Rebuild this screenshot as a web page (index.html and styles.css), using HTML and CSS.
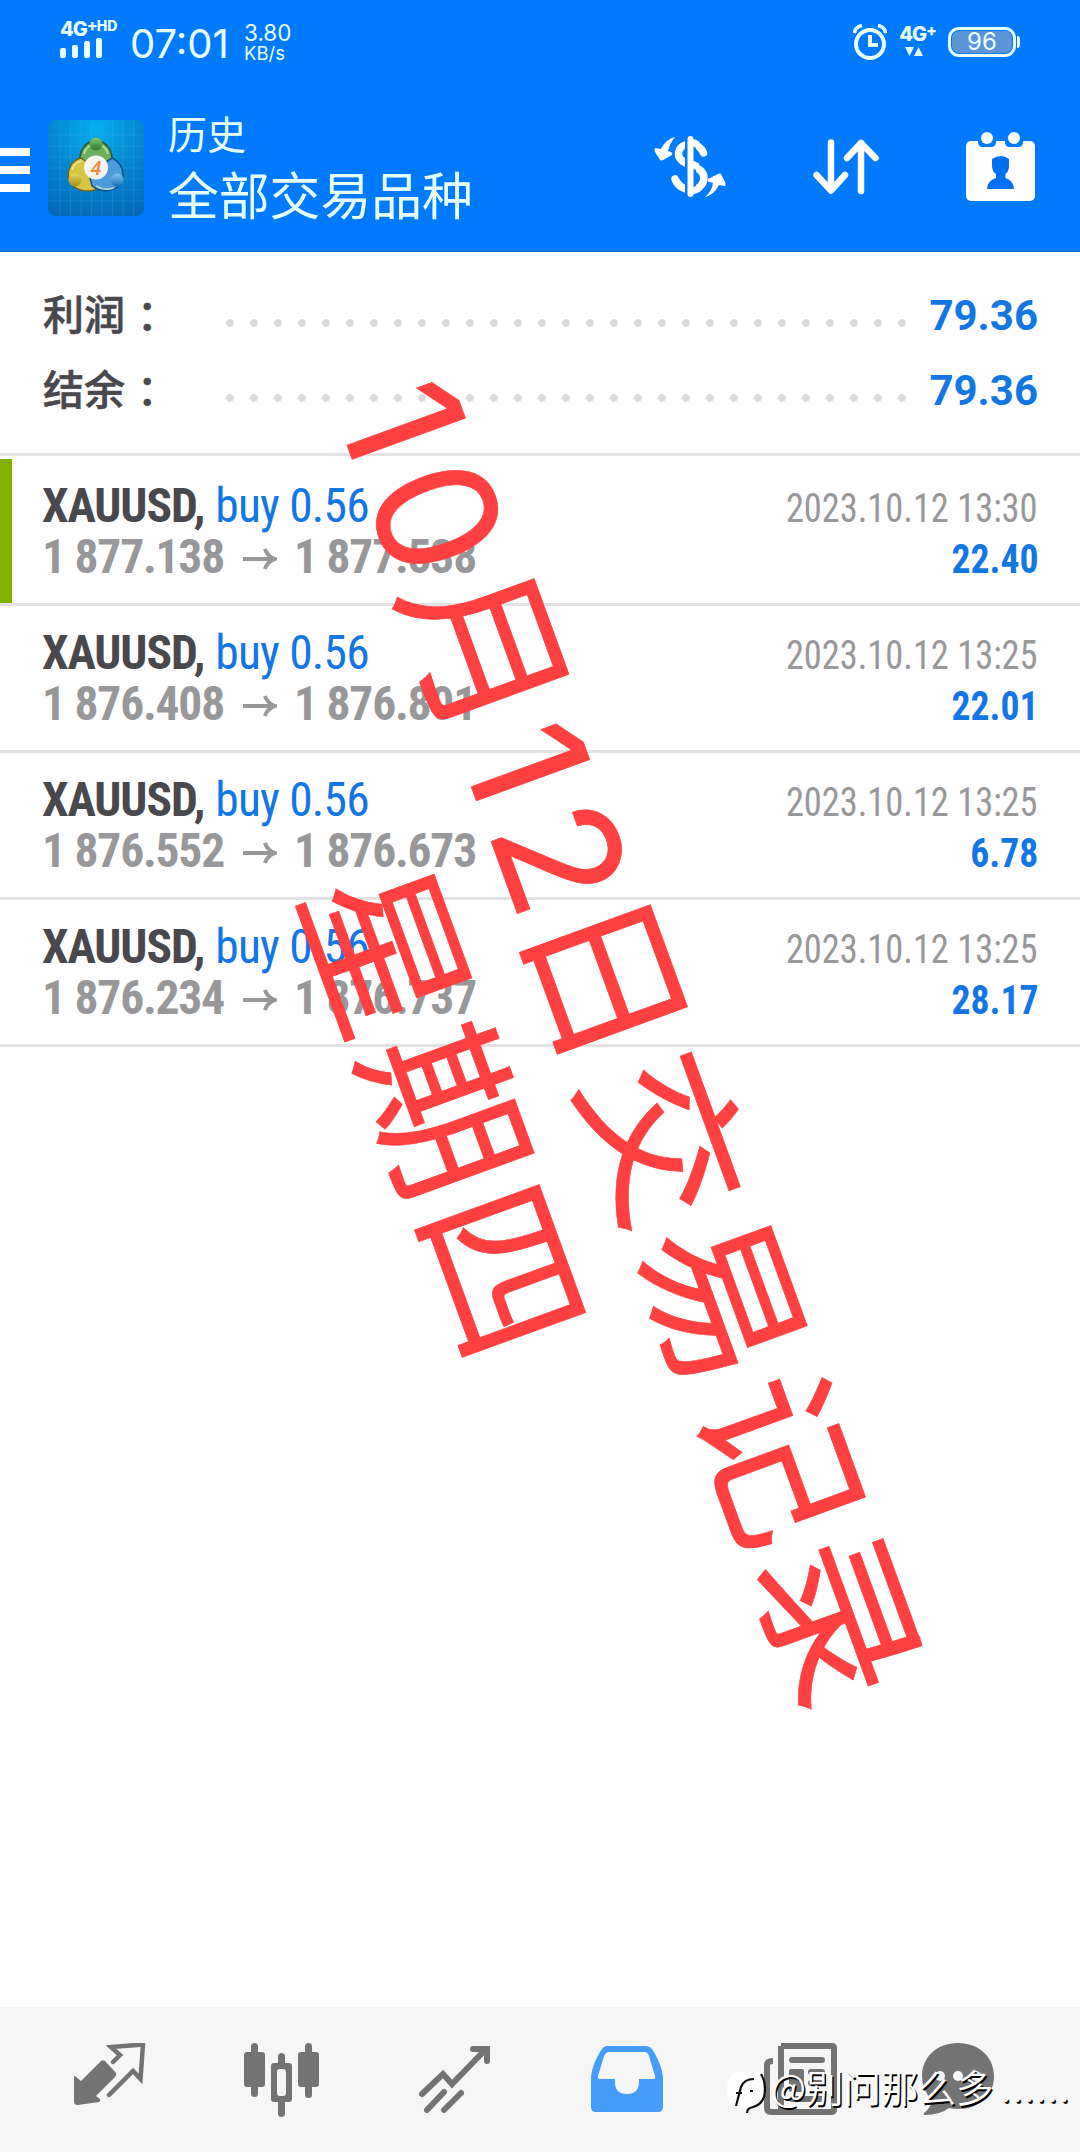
FILE: index.html
```
<!DOCTYPE html>
<html lang="zh-CN">
<head>
<meta charset="utf-8">
<title>历史</title>
<link rel="stylesheet" href="styles.css">
</head>
<body>
<div class="screen">
  <header class="top">
    <div class="status">
      <div class="signal">
        <div class="net">4G<sup class="plus">+</sup><sup class="hd">HD</sup></div>
        <svg width="42" height="20" viewBox="0 0 42 20" fill="#e8ffff"><rect x="0" y="10" width="6" height="10" rx="2"/><rect x="12" y="7" width="6" height="13" rx="2"/><rect x="24" y="3" width="6" height="17" rx="2"/><rect x="36" y="0" width="6" height="20" rx="2"/></svg>
      </div>
      <div class="clock">07:01</div>
      <div class="speed"><span class="rate">3.80</span><span class="unit">KB/s</span></div>
      <div class="status-right">
        <svg width="34" height="36" viewBox="0 0 34 36" fill="none" stroke="#e8ffff"><circle cx="17" cy="20" r="14" stroke-width="4"/><path d="M17 11v10h8" stroke-width="4"/><path d="M1.500 9Q2 3 9 1.500M32.500 9Q32 3 25 1.500" stroke-width="3.500"/></svg>
        <div class="data">
          <div class="net">4G<sup class="plus">+</sup></div>
          <svg width="18" height="9" viewBox="0 0 18 9" fill="#e8ffff"><path d="M0 0h9L4.500 9zM9 9h9L13.500 0z"/></svg>
        </div>
        <div class="battery"><span class="level">96</span></div>
      </div>
    </div>
    <div class="bar">
      <svg class="menu" width="30" height="44" viewBox="0 0 30 44" fill="#fff"><path d="M0 0h30v8H0zM0 18h30v8H0zM0 36h30v8H0z"/></svg>
      <svg class="logo" width="96" height="96" viewBox="0 0 96 96">
        <defs>
          <radialGradient id="sky" cx=".5" cy=".1" r=".95"><stop offset="0" stop-color="#02aff0"/><stop offset=".5" stop-color="#0687d0"/><stop offset="1" stop-color="#0368b8"/></radialGradient>
          <linearGradient id="green" x1="0" y1="0" x2="0" y2="1"><stop offset="0" stop-color="#8cc56a"/><stop offset="1" stop-color="#2b7a30"/></linearGradient>
          <linearGradient id="gold" x1="0" y1="0" x2="0" y2="1"><stop offset="0" stop-color="#e8d860"/><stop offset="1" stop-color="#a88a1c"/></linearGradient>
          <linearGradient id="blue" x1="0" y1="0" x2="0" y2="1"><stop offset="0" stop-color="#7cc4f2"/><stop offset="1" stop-color="#1d6fbe"/></linearGradient>
        </defs>
        <rect width="96" height="96" rx="7" fill="url(#sky)"/>
        <path d="M12 0v96M22.500 0v96M33 0v96M43.500 0v96M54 0v96M64.500 0v96M75 0v96M85.500 0v96M0 15h96M0 26h96M0 37h96M0 48h96M0 59h96M0 70h96M0 81h96" stroke="#5cc0ee" stroke-opacity=".18" fill="none"/>
        <path d="M48 21C58 21 65 30 64 42L48 48L32 42C31 30 38 21 48 21z" fill="#6fae5c" stroke="#24563a" stroke-width="1.500"/>
        <path d="M33 38L48 48L52 68C40 74 26 71 21 60C18 50 24 40 33 38z" fill="#d8c540" stroke="#6b6424" stroke-width="1.500"/>
        <path d="M64 38C73 42 77 52 74 61C68 73 54 73 44 66L42 58L48 48z" fill="#4a9cdc" stroke="#0f4f8c" stroke-width="1.500"/>
        <path d="M36 34Q38 25 48 24Q58 25 60 34M24 50Q26 42 34 41M48 66Q56 71 66 68" fill="none" stroke="#eaf6d0" stroke-opacity=".7" stroke-width="1.500"/>
        <circle cx="48" cy="24" r="6.500" fill="url(#green)"/><circle cx="27" cy="60" r="6.500" fill="url(#gold)"/><circle cx="69" cy="60" r="6.500" fill="url(#blue)"/>
        <circle cx="48" cy="47.500" r="12" fill="#f7f5f2"/>
        <text x="48" y="55" text-anchor="middle" class="four">4</text>
      </svg>
      <div class="titles"><span class="title">历史</span><span class="subtitle">全部交易品种</span></div>
      <div class="actions">
        <svg width="72" height="64" viewBox="0 0 72 64"><path d="M49.500 18C45 6 25 6 24.500 19C24 31 50 29 50 43C49 58 27 59 21 44" fill="none" stroke="#fff" stroke-width="7.500" stroke-linecap="round"/><path d="M36.500 5v55" stroke="#007aff" stroke-width="11"/><path d="M38 7.500Q41 8 44 10M38 29L44 32M38 56Q42 55.500 45 53" stroke="#fff" stroke-width="7" fill="none"/><path d="M36.500 4v55" stroke="#fff" stroke-width="6" stroke-linecap="round"/><path d="M21 2Q12 4 7 14L1 13Q0 15 1 17L6 25Q7 26 9 25L18 20Q19 18 17 17L14 16Q16 8 21 2zM51 62Q60 60 65 50L71 51Q72 50 71 47L67 39Q66 38 64 39L54 44Q53 46 55 47L59 48Q58 56 51 62z" fill="#fff"/></svg>
        <svg width="66" height="56" viewBox="0 0 66 56" fill="none" stroke="#fff" stroke-width="6.500" stroke-linecap="round" stroke-linejoin="round"><path d="M18 3.500V51M3.500 36L18 51.500L32 36M48 52V4M34 19L48 4L62.500 19"/></svg>
        <svg width="70" height="70" viewBox="0 0 70 70"><rect y="9" width="69" height="60" rx="5" fill="#fff"/><path d="M12 8v2q0 5 5 5h8q5 0 5-5V8zM39 8v2q0 5 5 5h8q5 0 5-5V8z" fill="#007aff"/><circle cx="21" cy="6" r="6" fill="#fff"/><circle cx="48" cy="6" r="6" fill="#fff"/><path d="M26 27Q35 21 43 27V34Q43 39 39.500 42V46Q48 49 48 57H21Q21 49 30 46V42Q26 39 26 34z" fill="#0070f0"/></svg>
      </div>
    </div>
  </header>
  <main class="content">
    <section class="summary">
      <div class="sum-row"><span class="label">利润<span class="colon">：</span></span><span class="dots"></span><span class="total">79.36</span></div>
      <div class="sum-row"><span class="label">结余<span class="colon">：</span></span><span class="dots"></span><span class="total">79.36</span></div>
    </section>
    <section class="deals">
      <article class="deal active"><div class="line"><span><b class="symbol">XAUUSD,</b> <span class="side">buy 0.56</span></span><span class="date">2023.10.12 13:30</span></div><div class="line"><span class="price"><span>1 877.138</span><svg class="arrow" viewBox="0 0 34 24"><path d="M0 12H31M22 2Q24 9 32 12Q24 15 22 22"/></svg><span>1 877.538</span></span><span class="profit">22.40</span></div></article>
      <article class="deal"><div class="line"><span><b class="symbol">XAUUSD,</b> <span class="side">buy 0.56</span></span><span class="date">2023.10.12 13:25</span></div><div class="line"><span class="price"><span>1 876.408</span><svg class="arrow" viewBox="0 0 34 24"><path d="M0 12H31M22 2Q24 9 32 12Q24 15 22 22"/></svg><span>1 876.801</span></span><span class="profit">22.01</span></div></article>
      <article class="deal"><div class="line"><span><b class="symbol">XAUUSD,</b> <span class="side">buy 0.56</span></span><span class="date">2023.10.12 13:25</span></div><div class="line"><span class="price"><span>1 876.552</span><svg class="arrow" viewBox="0 0 34 24"><path d="M0 12H31M22 2Q24 9 32 12Q24 15 22 22"/></svg><span>1 876.673</span></span><span class="profit">6.78</span></div></article>
      <article class="deal"><div class="line"><span><b class="symbol">XAUUSD,</b> <span class="side">buy 0.56</span></span><span class="date">2023.10.12 13:25</span></div><div class="line"><span class="price"><span>1 876.234</span><svg class="arrow" viewBox="0 0 34 24"><path d="M0 12H31M22 2Q24 9 32 12Q24 15 22 22"/></svg><span>1 876.737</span></span><span class="profit">28.17</span></div></article>
    </section>
  </main>
  <nav class="tabs">
    <svg width="74" height="76" viewBox="0 0 74 76"><path d="M1 34Q1 32 3 34L8 38L27 19Q29 16 32 18L43 30Q44 32 42 34L23 53L27 56Q28 58 26 59L5 62Q1 62 1 59z" fill="#737373"/><path d="M40 19L47 12L38 4L70 1.500L67.500 36L60 28L36 52" fill="none" stroke="#737373" stroke-width="4.500" stroke-linecap="round"/></svg>
    <svg width="76" height="76" viewBox="0 0 76 76" fill="#737373"><rect y="9" width="21" height="35" rx="3"/><rect x="7" width="7" height="54" rx="3.500"/><rect x="54" y="9" width="21" height="35" rx="3"/><rect x="61" width="7" height="55" rx="3.500"/><rect x="34" y="10" width="7" height="64" rx="3.500"/><rect x="27" y="20" width="21" height="39" rx="3"/><rect x="33" y="26" width="9" height="27" rx="3" fill="#f6f6f6"/></svg>
    <svg width="74" height="76" viewBox="0 0 74 76" fill="none" stroke="#737373" stroke-width="6" stroke-linecap="round"><path d="M5 51L26 31L35 41L68 7M56 6H70V18M10 67L27 49M27 67L44 50"/></svg>
    <svg width="74" height="76" viewBox="0 0 74 76"><path d="M17 3H56Q61 3 64 9Q72 23 73 34V64Q73 69 68 69H6Q1 69 1 64V34Q2 22 10 9Q13 3 17 3zM19 9Q16 9 14 13L8 33Q7 36 11 36H25V39Q25 51 37 51Q49 51 49 39V36H63Q66 36 65 33L59 13Q58 9 54 9z" fill="#449cfb" fill-rule="evenodd"/></svg>
    <svg width="76" height="76" viewBox="0 0 76 76" fill="none" stroke="#737373" stroke-width="6"><path d="M18 3H69Q71 3 71 5V66Q71 69 68 69H8Q4 69 4 65V22Q4 18 10 18M18 3V69"/><path d="M29 17H59M48 29H59M48 40H59M29 56H59" stroke-linecap="round"/><rect x="26" y="26" width="15" height="23" fill="#737373" stroke="none" rx="2"/></svg>
    <svg width="74" height="76" viewBox="0 0 74 76"><path d="M36 0C57 0 72 14 72 33C72 53 57 66 36 66Q31 66 27 65Q18 72 3 72Q1 72 2 70Q9 65 10 57Q0 47 0 33C0 14 15 0 36 0z" fill="#737373"/><circle cx="18" cy="33" r="5" fill="#f6f6f6"/><circle cx="36" cy="33" r="5" fill="#f6f6f6"/><circle cx="54" cy="33" r="5" fill="#f6f6f6"/></svg>
  </nav>
  <div class="note"><span class="one">1</span>0月<span class="one">1</span><span class="two">2</span>日交易记录<br>星期四</div>
  <div class="credit"><svg width="39" height="44" viewBox="0 0 39 44"><path d="M12 2H26Q38 2 38 16V24Q38 34 28 38L18 42L16 37H12Q0 36 0 20Q0 2 12 2z" fill="#fff"/><path d="M9 36L14 17Q17 9 27 9M9 23H15M34 4Q40 14 37 27Q34 35 26 37Q20 38 20 43M23 21h3" fill="none" stroke="#111" stroke-width="2.200"/></svg><span>@别问那么多</span><span class="ellipsis">......</span></div>
</div>
</body>
</html>
```
FILE: styles.css
```
body { margin: 0; background: #fff; }
.screen { position: relative; width: 1080px; height: 2152px; display: flex; flex-direction: column; overflow: hidden; background: #fefefe; font-family: Roboto, "Noto Sans CJK SC", sans-serif; }
svg { display: block; flex: none; }
.top { height: 250px; background: #007aff; border-bottom: 2px solid #1070d8; color: #e8ffff; flex: none; }
.status { height: 84px; display: flex; align-items: flex-start; padding: 0 60px; font-family: Inter, sans-serif; }
.signal { padding-top: 20px; width: 70px; }
.net { font-size: 20px; line-height: 18px; height: 18px; font-weight: 800; letter-spacing: -1px; white-space: nowrap; }
.net sup { vertical-align: 5px; line-height: 0; }
.plus { font-size: 16px; }
.hd { font-size: 14px; letter-spacing: 0; }
.clock { font-size: 40px; line-height: 48px; padding-top: 20px; width: 114px; }
.speed { display: flex; flex-direction: column; padding-top: 22px; }
.rate { font-size: 22.5px; line-height: 22px; }
.unit { font-size: 18.5px; line-height: 19px; }
.status-right { margin-left: auto; display: flex; gap: 12px; padding-top: 24px; }
.data { display: flex; flex-direction: column; align-items: center; gap: 4px; }
.data .net { padding-top: 1px; }
.data svg { margin-left: -8px; }
.battery { position: relative; box-sizing: border-box; width: 68px; height: 30px; margin: 3px 4px 0 0; padding: 1px; border: 3px solid #e8ffff; border-radius: 11px; }
.battery::after { content: ""; position: absolute; right: -7px; top: 6px; width: 3px; height: 12px; border-radius: 0 4px 4px 0; background: #e8ffff; }
.level { display: block; height: 22px; border-radius: 7px; background: #5b95d8; font-size: 24px; line-height: 22px; text-align: center; }
.bar { display: flex; align-items: flex-start; padding-right: 44px; }
.menu { margin-top: 64px; }
.logo { margin: 36px 0 0 18px; }
.four { font: italic 500 20px Roboto, sans-serif; fill: #ee8a44; }
.titles { display: flex; flex-direction: column; margin-left: 24px; padding-top: 24px; }
.title { font-size: 39px; line-height: 56px; }
.subtitle { font-size: 50.8px; line-height: 68px; }
.actions { margin-left: auto; display: flex; align-items: center; gap: 87px; padding-top: 48px; }
.summary { height: 175px; border-bottom: 3px solid #e2e2e4; padding: 26px 42px 0 43px; }
.sum-row { display: flex; align-items: center; height: 75px; }
.label { width: 183px; margin-top: -7px; font-size: 41px; font-weight: 500; color: #48484d; -webkit-text-stroke: .6px #48484d; }
.colon { margin-left: 12px; }
.dots { width: 680px; height: 8px; margin-top: 15px; background: radial-gradient(circle at 4px 4px, #dcdcdc 3.500px, transparent 4.300px) 0 0 / 24px 8px; }
.total { margin-left: auto; font-size: 42px; font-weight: 700; color: #1277e4; }
.deals { padding-top: 3px; }
.deal { box-sizing: border-box; height: 147px; border-bottom: 3px solid #e2e2e4; padding: 22px 42px 0 42px; font-stretch: 75%; font-family: "Roboto Condensed", Roboto, sans-serif; }
.active { box-shadow: inset 12px 0 #80b000; }
.line { display: flex; justify-content: space-between; align-items: baseline; height: 51px; line-height: 51px; font-size: 47.5px; white-space: nowrap; }
.symbol { color: #48484d; letter-spacing: -1.1px; }
.side { color: #1277e4; letter-spacing: -.8px; }
.price { color: #98989a; font-weight: 700; display: flex; align-items: center; gap: 17px; letter-spacing: -1.2px; }
.arrow { width: 34px; height: 24px; margin: 3px 0 0 2px; fill: none; stroke: #98989a; stroke-width: 4; }
.date, .profit { font-size: 40px; transform: scaleX(.91); transform-origin: right; }
.date { color: #98989a; }
.profit { font-weight: 700; color: #1277e4; transform: scaleX(.94); }
.tabs { box-sizing: border-box; height: 145px; margin-top: auto; background: #f6f6f6; display: grid; grid-template-columns: 171px 173px 173px 173px 159px 76px; padding: 36px 0 0 73px; flex: none; }
.note { position: absolute; left: 537px; top: 1079px; transform: translate(-50%, -50%) rotate(70deg); font: 166px/197px Inter, "Noto Sans CJK SC", sans-serif; letter-spacing: 4.500px; text-align: center; white-space: nowrap; color: #ff4040; -webkit-text-stroke: .6px #ff4040; }
.one { letter-spacing: 16px; }
.two { letter-spacing: -4px; }
.credit { position: absolute; left: 727px; top: 2058px; display: flex; align-items: center; gap: 5px; font: 37.5px/50px "Noto Sans CJK SC", sans-serif; font-weight: 350; color: #fff; text-shadow: 1.500px 1.500px 0 #000; white-space: nowrap; }
.credit svg { margin-top: 12px; }
.ellipsis { letter-spacing: 1.600px; margin-left: 2px; }
```
